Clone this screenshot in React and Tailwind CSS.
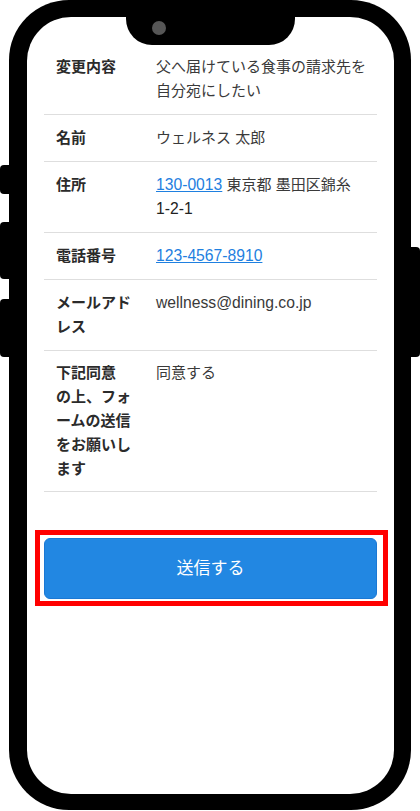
import React from 'react';

const Latin = ({ children }) => <span className="text-[15.7px]">{children}</span>;

const rows = [
    { label: <>変更内容</>, value: <>父へ届けている食事の請求先を<br />自分宛にしたい</> },
    { label: <>名前</>, value: <>ウェルネス 太郎</> },
    {
        label: <>住所</>,
        value: <><a href="#" className="text-[#1f80e0] underline"><Latin>130-0013</Latin></a> 東京都 墨田区錦糸<br /><span className="text-[#222]"><Latin>1-2-1</Latin></span></>,
    },
    { label: <>電話番号</>, value: <a href="#" className="text-[#1f80e0] underline"><Latin>123-4567-8910</Latin></a> },
    { label: <>メールアド<br />レス</>, value: <Latin>wellness@dining.co.jp</Latin> },
    { label: <>下記同意<br />の上、フォ<br />ームの送信<br />をお願いし<br />ます</>, value: <>同意する</>, last: true },
];

const App = () => {
    return (
        <div
            className="relative w-[420px] h-[811px] bg-white overflow-hidden"
            style={{ fontFamily: '"Liberation Sans", "Noto Sans CJK JP", sans-serif' }}
        >
            {/* side buttons */}
            <div className="absolute left-0 top-[165px] w-[12px] h-[29px] bg-black rounded-l-[4px]"></div>
            <div className="absolute left-0 top-[222px] w-[12px] h-[57px] bg-black rounded-l-[4px]"></div>
            <div className="absolute left-0 top-[299px] w-[12px] h-[58px] bg-black rounded-l-[4px]"></div>
            <div className="absolute right-0 top-[247px] w-[12px] h-[110px] bg-black rounded-r-[4px]"></div>

            <div className="relative ml-[9px] w-[402px] h-[810px] bg-black rounded-[60px] pt-[17px] pl-[18px] pr-[17px] pb-[16px]">
                {/* notch */}
                <div className="absolute left-[117px] top-0 w-[169px] h-[45px] bg-black rounded-b-[26px] z-10">
                    <div className="absolute left-[26px] top-[21px] w-[14px] h-[14px] rounded-full bg-[#565656]"></div>
                </div>

                <div className="w-full h-full bg-white rounded-[44px] overflow-hidden pt-[27px]">
                    <div className="flex flex-col mx-[17px] text-[15px] leading-[24px]">
                        {rows.map((r, i) => (
                            <div key={i} className={r.last ? 'flex border-b border-[#dedede] py-[10px]' : 'flex border-b border-[#dedede] py-[11px]'}>
                                <div className="w-[112px] shrink-0 pl-[12px] font-bold text-[#2b2b2b]">{r.label}</div>
                                <div className="flex-1 text-[#3a3a3a]">{r.value}</div>
                            </div>
                        ))}
                    </div>

                    <div className="mt-[38px] ml-[8px] w-[353px] border-[5px] border-[#ff0000] pt-[3px] pb-[2px] pl-[4px] pr-[6px]">
                        <button className="w-full h-[61px] rounded-[6px] bg-[#2287e2] border border-[#1b78d4] text-white text-[17px]">
                            送信する
                        </button>
                    </div>
                </div>
            </div>
        </div>
    );
};

export default App;
